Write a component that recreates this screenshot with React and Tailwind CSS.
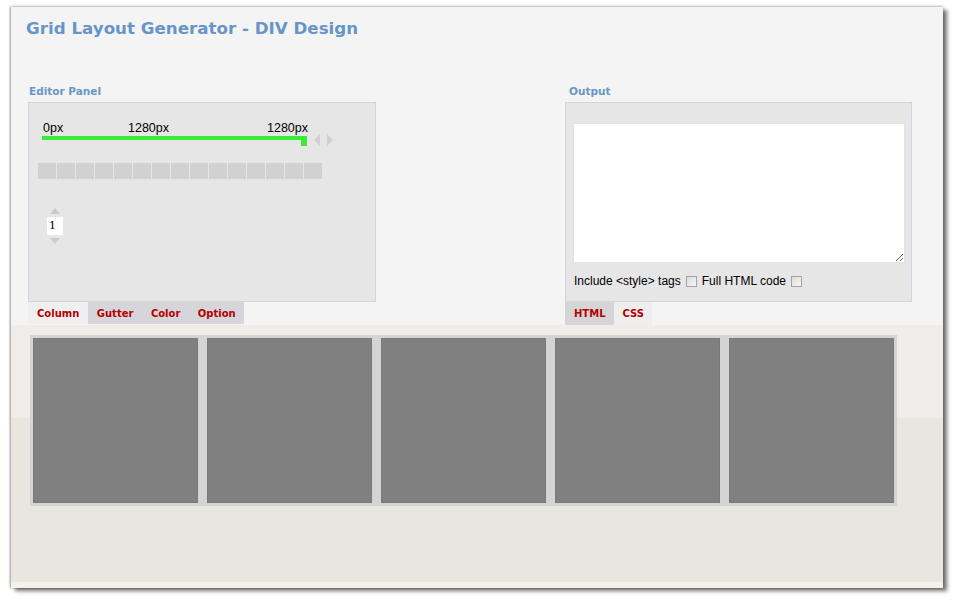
import React from "react";

const verdana = { fontFamily: '"DejaVu Sans", Verdana, sans-serif' };

const leftTabs = [
  { name: "Column", active: true },
  { name: "Gutter" },
  { name: "Color" },
  { name: "Option" },
];

const outTabs = [
  { name: "HTML", active: false },
  { name: "CSS", active: true },
];

const columns = [1, 2, 3, 4, 5];
const cells = Array.from({ length: 15 }, (_, i) => i);

function Tab({ name, active }) {
  return (
    <div
      className={`h-[22px] pl-[9px] pr-[8.5px] flex items-center text-[10px] font-bold text-[#b40000] ${
        active ? "bg-[#f0eff0]" : "bg-[#d6d6da]"
      }`}
      style={verdana}
    >
      {name}
    </div>
  );
}

function Checkbox() {
  return <span className="inline-block w-[11px] h-[11px] border border-[#a3a3a3] bg-[linear-gradient(135deg,#dcdcdc,#f6f6f6)]" />;
}

function EditorPanel() {
  return (
    <div className="w-[348px]">
      <div className="text-[10.5px] leading-4 font-bold text-[#6b96c6] pl-px mb-[3px]" style={verdana}>
        Editor Panel
      </div>
      <div className="h-[200px] bg-[#e6e6e6] border border-[#d3d3e4] pt-[17px]">
        <div className="flex items-start pl-[13px]">
          <div
            className="relative w-[265px] h-[26px] text-[12.5px] text-black"
            style={{ fontFamily: '"Liberation Sans", Arial, sans-serif' }}
          >
            <span className="absolute left-px top-0 leading-4">0px</span>
            <span className="absolute left-[86px] top-0 leading-4">1280px</span>
            <span className="absolute right-[-1px] top-0 leading-4">1280px</span>
            <div className="absolute left-0 right-0 top-[16px] h-[4px] bg-[#38ec38]" />
            <div className="absolute right-0 top-[16px] w-[6px] h-[10px] bg-[#38ec38]" />
          </div>
          <div className="flex gap-[7px] ml-[7px] mt-[14px]">
            <span className="w-0 h-0 border-y-[6px] border-y-transparent border-r-[6px] border-r-[#cfcfcf]" />
            <span className="w-0 h-0 border-y-[6px] border-y-transparent border-l-[6px] border-l-[#cfcfcf]" />
          </div>
        </div>
        <div className="flex gap-px ml-[9px] mt-[17px]">
          {cells.map((c) => (
            <div key={c} className="w-[18px] h-[16px] bg-[#d1d1d1]" />
          ))}
        </div>
        <div className="flex flex-col items-center w-[16px] ml-[18px] mt-[29px] gap-[3px]">
          <span className="w-0 h-0 border-x-[5px] border-x-transparent border-b-[6px] border-b-[#cbcbcb]" />
          <div
            className="w-[16px] h-[18px] bg-white text-[11px] leading-[18px] pl-[2px] text-black"
            style={{ fontFamily: '"DejaVu Serif", serif' }}
          >
            1
          </div>
          <span className="w-0 h-0 border-x-[5px] border-x-transparent border-t-[6px] border-t-[#cbcbcb]" />
        </div>
      </div>
      <div className="flex">
        {leftTabs.map((t) => (
          <Tab key={t.name} {...t} />
        ))}
      </div>
    </div>
  );
}

function OutputPanel() {
  return (
    <div className="w-[347px]">
      <div className="text-[10.5px] leading-4 font-bold text-[#6b96c6] pl-[4px] mb-[3px]" style={verdana}>
        Output
      </div>
      <div className="h-[200px] bg-[#e6e6e6] border border-[#d3d3e4] pt-[20px]">
        <textarea
          readOnly
          className="block w-[332px] h-[140px] ml-[7px] bg-white border border-[#e2e2e2] outline-none"
        />
        <div
          className="flex items-center mt-[10px] ml-[8px] text-[12px] leading-4 text-black gap-[5px]"
          style={{ fontFamily: '"Liberation Sans", Arial, sans-serif' }}
        >
          <span>Include &lt;style&gt; tags</span>
          <Checkbox />
          <span>Full HTML code</span>
          <Checkbox />
        </div>
      </div>
      <div className="flex">
        {outTabs.map((t) => (
          <div
            key={t.name}
            className={`h-[23px] pl-[9px] pr-[8px] flex items-center text-[10px] font-bold text-[#b40000] ${
              t.active ? "bg-[#eeeeee]" : "bg-[#d5d5d8]"
            }`}
            style={verdana}
          >
            {t.name}
          </div>
        ))}
      </div>
    </div>
  );
}

export default function App() {
  return (
    <div className="w-[954px] h-[600px] bg-white pt-[7px] pl-[11px] overflow-hidden">
      <div className="w-[932px] h-[581px] flex flex-col shadow-[4px_3px_4px_rgba(0,0,0,0.55),-1px_0_2px_rgba(0,0,0,0.35),0_-1px_3px_rgba(0,0,0,0.15)]">
        <div className="h-[318px] bg-[#f4f4f4] pt-[9px]">
          <h1 className="text-[16.7px] leading-6 font-bold text-[#6795c8] pl-[15px]" style={verdana}>
            Grid Layout Generator - DIV Design
          </h1>
          <div className="flex gap-[189px] ml-[17px] mt-[43px]">
            <EditorPanel />
            <OutputPanel />
          </div>
        </div>
        <div className="flex-1 pt-[10px] pl-[19px] bg-[linear-gradient(#efecea_0,#efecea_93px,#e8e6df_93px,#e8e6df_257px,#f3f1ea_257px)]">
          <div className="w-[867px] p-[3px] bg-[#d4d4d4] flex gap-[9px]">
            {columns.map((c) => (
              <div key={c} className="w-[165px] h-[165px] bg-[#808080] border border-[#7a7a7a]" />
            ))}
          </div>
        </div>
      </div>
    </div>
  );
}
